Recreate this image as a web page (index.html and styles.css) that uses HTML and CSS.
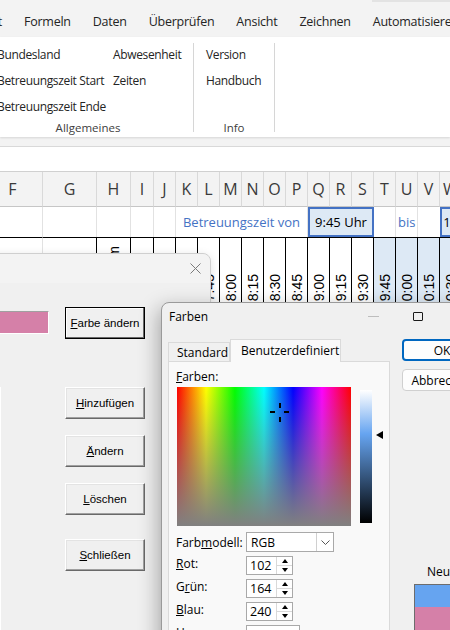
FILE: index.html
```html
<!DOCTYPE html>
<html lang="de">
<head>
    <meta charset="UTF-8">
    <title>Farben</title>
    <link rel="stylesheet" href="styles.css">
</head>
<body>

    <div class="topstrip"><div class="searchbox"></div></div>

    <div class="tabs">
        <span class="tab first">Seitenlayout</span>
        <span class="tab">Formeln</span>
        <span class="tab">Daten</span>
        <span class="tab">Überprüfen</span>
        <span class="tab">Ansicht</span>
        <span class="tab">Zeichnen</span>
        <span class="tab">Automatisieren</span>
    </div>

    <div class="ribbon">
        <div class="group allg">
            <div class="items">
                <div class="col col1">
                    <span>Bundesland</span>
                    <span>Betreuungszeit Start</span>
                    <span>Betreuungszeit Ende</span>
                </div>
                <div class="col">
                    <span>Abwesenheit</span>
                    <span>Zeiten</span>
                </div>
            </div>
            <div class="glabel">Allgemeines</div>
        </div>
        <div class="sep"></div>
        <div class="group info">
            <div class="items">
                <div class="col">
                    <span>Version</span>
                    <span>Handbuch</span>
                </div>
            </div>
            <div class="glabel">Info</div>
        </div>
        <div class="sep"></div>
    </div>

    <div class="formulabar"></div>

    <div class="sheet">
        <div class="hd">F</div><div class="hd">G</div><div class="hd">H</div><div class="hd">I</div><div class="hd">J</div>
        <div class="hd">K</div><div class="hd">L</div><div class="hd">M</div><div class="hd">N</div><div class="hd">O</div>
        <div class="hd">P</div><div class="hd">Q</div><div class="hd">R</div><div class="hd">S</div><div class="hd">T</div>
        <div class="hd">U</div><div class="hd">V</div><div class="hd">W</div><div class="hd">X</div><div class="hd">Y</div>

        <div class="c1"></div><div class="c1"></div><div class="c1"></div><div class="c1"></div><div class="c1"></div>
        <div class="c1 label span6">Betreuungszeit von</div>
        <div class="c1 timebox span3">9:45 Uhr</div>
        <div class="c1"></div>
        <div class="c1 bis">bis</div>
        <div class="c1 plain"></div>
        <div class="c1 timebox span3">10:30 Uhr</div>

        <div class="c2 light"></div>
        <div class="c2 light edge"></div>
        <div class="c2 rc top"><span class="rot">Datum</span></div>
        <div class="c2 rc"></div>
        <div class="c2 rc"></div>
        <div class="c2 rc"><span class="rot">7:30</span></div>
        <div class="c2 rc"><span class="rot">7:45</span></div>
        <div class="c2 rc"><span class="rot">8:00</span></div>
        <div class="c2 rc"><span class="rot">8:15</span></div>
        <div class="c2 rc"><span class="rot">8:30</span></div>
        <div class="c2 rc"><span class="rot">8:45</span></div>
        <div class="c2 rc"><span class="rot">9:00</span></div>
        <div class="c2 rc"><span class="rot">9:15</span></div>
        <div class="c2 rc"><span class="rot">9:30</span></div>
        <div class="c2 rc blue"><span class="rot">9:45</span></div>
        <div class="c2 rc blue"><span class="rot">10:00</span></div>
        <div class="c2 rc blue"><span class="rot">10:15</span></div>
        <div class="c2 rc blue"><span class="rot">10:30</span></div>
        <div class="c2 rc blue"><span class="rot">10:45</span></div>
        <div class="c2 rc blue"><span class="rot">11:00</span></div>
    </div>

    <!-- UserForm -->
    <div class="userform">
        <div class="uf-title">
            <svg class="uf-close" width="11" height="11" viewBox="0 0 11 11"><path d="M0.5 0.5 L10.5 10.5 M10.5 0.5 L0.5 10.5" stroke="#7a7a7a" stroke-width="1" fill="none"/></svg>
        </div>
        <div class="uf-body">
            <div class="uf-left">
                <div class="swatch"></div>
                <div class="listbox"></div>
            </div>
            <div class="uf-buttons">
                <button class="btn default" type="button"><u>F</u>arbe ändern</button>
                <button class="btn gap-big" type="button"><u>H</u>inzufügen</button>
                <button class="btn gap" type="button"><u>Ä</u>ndern</button>
                <button class="btn gap" type="button"><u>L</u>öschen</button>
                <button class="btn gap-mid" type="button"><u>S</u>chließen</button>
            </div>
        </div>
    </div>

    <!-- Farben dialog -->
    <div class="farben">
        <div class="fb-title">
            <span class="fb-name">Farben</span>
            <span class="fb-min"></span>
            <span class="fb-max"></span>
        </div>
        <div class="fb-body">
            <div class="fb-left">
                <div class="fb-tabs">
                    <div class="fb-tab">Standard</div>
                    <div class="fb-tab active">Benutzerdefiniert</div>
                </div>
                <div class="fb-panel">
                    <div class="fb-label"><u>F</u>arben:</div>
                    <div class="picker">
                        <div class="spectrum">
                            <svg class="cross" width="20" height="20" viewBox="0 0 20 20">
                                <rect x="9" y="0" width="2" height="5" fill="#000"/>
                                <rect x="9" y="14" width="2" height="5" fill="#000"/>
                                <rect x="0" y="8" width="5" height="2" fill="#000"/>
                                <rect x="14" y="8" width="5" height="2" fill="#000"/>
                            </svg>
                        </div>
                        <div class="lumbar"></div>
                        <div class="lumarrow"><span></span></div>
                    </div>
                    <div class="frow combo-row">
                        <span class="flabel">Farb<u>m</u>odell:</span>
                        <div class="combo"><span>RGB</span><span class="drop"><svg width="9" height="5" viewBox="0 0 9 5"><path d="M0.5 0.5 L4.5 4.5 L8.5 0.5" stroke="#555" fill="none"/></svg></span></div>
                    </div>
                    <div class="frow">
                        <span class="flabel"><u>R</u>ot:</span>
                        <div class="spin"><span class="val">102</span><span class="arrows"><i class="up"></i><i class="down"></i></span></div>
                    </div>
                    <div class="frow">
                        <span class="flabel">G<u>r</u>ün:</span>
                        <div class="spin"><span class="val">164</span><span class="arrows"><i class="up"></i><i class="down"></i></span></div>
                    </div>
                    <div class="frow">
                        <span class="flabel"><u>B</u>lau:</span>
                        <div class="spin"><span class="val">240</span><span class="arrows"><i class="up"></i><i class="down"></i></span></div>
                    </div>
                    <div class="frow">
                        <span class="flabel"><u>H</u>ex:</span>
                        <div class="spin wide"><span class="val">#66A4F0</span></div>
                    </div>
                </div>
            </div>
            <div class="fb-right">
                <button class="wbtn ok" type="button">OK</button>
                <button class="wbtn" type="button">Abbrechen</button>
                <div class="neu">Neu</div>
                <div class="preview">
                    <div class="p-new"></div>
                    <div class="p-old"></div>
                </div>
            </div>
        </div>
    </div>

</body>
</html>
```

FILE: styles.css
```css
html, body {
    margin: 0;
    padding: 0;
}

body {
    width: 450px;
    height: 630px;
    overflow: hidden;
    position: relative;
    background-color: #f3f3f3;
    font-family: "Open Sans", "Noto Sans", sans-serif;
    color: #1f1f1f;
}

/* ---------- ribbon ---------- */

.topstrip {
    height: 5px;
    position: relative;
}

.searchbox {
    margin-left: 372px;
    height: 2px;
    background-color: #e3e3e3;
}

.tabs {
    height: 32px;
    display: flex;
    align-items: center;
    gap: 22px;
    white-space: nowrap;
    font-size: 12.5px;
    letter-spacing: -0.25px;
    color: #242424;
}

.tab.first {
    width: 80px;
    margin-left: -78px;
    text-align: right;
    flex-shrink: 0;
}

.ribbon {
    height: 100px;
    background-color: #fff;
    display: flex;
    box-shadow: 0 1px 2px rgba(0,0,0,0.12);
    font-size: 12px;
    letter-spacing: -0.35px;
    color: #242424;
}

.group {
    display: flex;
    flex-direction: column;
}

.group.allg {
    width: 210px;
    margin-left: -17px;
    flex-shrink: 0;
}

.group.info {
    width: 80px;
    flex-shrink: 0;
}

.items {
    display: flex;
    padding-top: 5px;
    height: 78px;
}

.allg .items {
    padding-left: 14px;
}

.info .items {
    padding-left: 12px;
}

.col {
    display: flex;
    flex-direction: column;
    white-space: nowrap;
}

.col span {
    height: 26px;
    line-height: 26px;
}

.col1 {
    width: 116px;
}

.glabel {
    text-align: center;
    font-size: 11.5px;
    letter-spacing: 0;
    color: #404040;
    line-height: 16px;
}

.sep {
    width: 1px;
    background-color: #d6d6d6;
    margin: 6px 0 5px;
}

.formulabar {
    margin-top: 9px;
    height: 24px;
    background-color: #fff;
    border-top: 1px solid #d9d9d9;
}

/* ---------- sheet ---------- */

.sheet {
    margin-left: -17px;
    display: grid;
    grid-template-columns: 60px 54px 34px 23px 22px repeat(15, 22px);
    grid-template-rows: 35px 30px 420px;
    background-color: #fff;
    border-top: 1px solid #d0d0d0;
}

.hd {
    background-color: #f3f3f3;
    border-right: 1px solid #d9d9d9;
    border-bottom: 1px solid #c6c6c6;
    font-size: 16px;
    color: #3a3a3a;
    display: flex;
    align-items: center;
    justify-content: center;
}

.c1 {
    border-right: 1px solid #e2e2e2;
    font-size: 13px;
    display: flex;
    align-items: center;
    white-space: nowrap;
}

.c1.plain {
    border-right: none;
}

.span6 {
    grid-column: span 6;
}

.span3 {
    grid-column: span 3;
}

.label {
    justify-content: center;
    color: #4472c4;
}

.bis {
    color: #4472c4;
    padding-left: 2px;
}

.timebox {
    background-color: #dde9f5;
    border: 2px solid #4472c4;
    justify-content: center;
    color: #000;
}

.c2 {
    border-top: 1px solid #000;
}

.c2.light {
    border-right: 1px solid #e2e2e2;
}

.c2.edge {
    border-right: 1px solid #000;
}

.c2.rc {
    border-right: 1px solid #000;
    display: flex;
    justify-content: center;
    align-items: flex-start;
    padding-top: 36px;
}

.c2.top {
    padding-top: 8px;
}

.c2.blue {
    background-color: #dde9f5;
}

.rot {
    writing-mode: vertical-rl;
    transform: rotate(180deg);
    font-family: "Liberation Sans", sans-serif;
    font-size: 14px;
    line-height: 16px;
    color: #000;
}

/* ---------- UserForm ---------- */

.userform {
    position: absolute;
    left: -41px;
    top: 253px;
    width: 250px;
    height: 420px;
    background-color: #f0f0f0;
    border: 1px solid #cfcfcf;
    border-top-right-radius: 8px;
    box-shadow: 0 2px 10px rgba(0,0,0,0.12);
}

.uf-title {
    height: 29px;
    background-color: #f3f3f3;
    border-top-right-radius: 8px;
    display: flex;
    align-items: center;
    justify-content: flex-end;
    padding-right: 9px;
}

.uf-body {
    display: flex;
    font-family: "Liberation Sans", sans-serif;
    font-size: 11.5px;
}

.uf-left {
    width: 105px;
    display: flex;
    flex-direction: column;
}

.swatch {
    margin: 28px 0 0 20px;
    width: 68px;
    height: 21px;
    background-color: #d580a8;
    border-top: 1px solid #a0a0a0;
    border-bottom: 1px solid #fff;
    border-right: 1px solid #fff;
}

.listbox {
    margin: 53px 0 0 20px;
    width: 21px;
    height: 300px;
    background-color: #fff;
}

.uf-buttons {
    display: flex;
    flex-direction: column;
    padding-top: 24px;
}

.btn {
    width: 80px;
    height: 32px;
    padding: 0;
    background-color: #f0f0f0;
    border: 1px solid;
    border-color: #fff #696969 #696969 #fff;
    box-shadow: inset -1px -1px #a0a0a0, inset 1px 1px #e3e3e3;
    font-family: inherit;
    font-size: inherit;
    color: #000;
}

.btn.default {
    border-color: #000;
    box-shadow: inset -1px -1px #696969, inset 1px 1px #fff;
}

.btn.gap-big {
    margin-top: 48px;
}

.btn.gap {
    margin-top: 16px;
}

.btn.gap-mid {
    margin-top: 24px;
}

/* ---------- Farben dialog ---------- */

.farben {
    position: absolute;
    left: 161px;
    top: 302px;
    width: 320px;
    height: 360px;
    background-color: #f0f0f0;
    border: 1px solid #9a9a9a;
    border-top-left-radius: 8px;
    box-shadow: -3px 6px 20px rgba(0,0,0,0.3);
    font-size: 12px;
    color: #000;
}

.fb-title {
    height: 27px;
    display: flex;
    align-items: center;
    padding-left: 7px;
}

.fb-name {
    flex: 1;
}

.fb-min {
    width: 11px;
    height: 1px;
    background-color: #bdbdbd;
    margin-right: 34px;
}

.fb-max {
    width: 8px;
    height: 7px;
    border: 1px solid #1a1a1a;
    border-radius: 1px;
    margin-right: 59px;
    margin-top: -1px;
}

.fb-body {
    display: flex;
    padding: 9px 0 0 6px;
    gap: 12px;
}

.fb-left {
    width: 224px;
    display: flex;
    flex-direction: column;
}

.fb-tabs {
    display: flex;
    align-items: flex-end;
    height: 22px;
}

.fb-tab {
    height: 19px;
    line-height: 19px;
    box-sizing: border-box;
    border: 1px solid #dadada;
    border-bottom: none;
    padding-left: 8px;
    width: 62px;
    background-color: #f0f0f0;
}

.fb-tab.active {
    height: 23px;
    line-height: 21px;
    width: 111px;
    padding-left: 10px;
    background-color: #f9f9f9;
    margin-bottom: -1px;
    position: relative;
}

.fb-panel {
    height: 300px;
    background-color: #f9f9f9;
    border: 1px solid #dadada;
    padding: 7px 0 0 7px;
}

.fb-label {
    line-height: 16px;
}

.picker {
    display: flex;
    margin-top: 2px;
}

.spectrum {
    margin-left: 1px;
    width: 174px;
    height: 139px;
    position: relative;
    background:
        linear-gradient(to bottom, rgba(128,128,128,0), #808080),
        linear-gradient(to right, #f00 0%, #ff0 16.7%, #0f0 33.3%, #0ff 50%, #00f 66.7%, #f0f 83.3%, #f00 100%);
}

.cross {
    position: absolute;
    left: 93px;
    top: 16px;
}

.lumbar {
    margin: 3px 0 0 9px;
    width: 12px;
    height: 133px;
    background: linear-gradient(to bottom, #fff 0%, #66a4f0 33%, #000 100%);
}

.lumarrow {
    padding: 44px 0 0 4px;
}

.lumarrow span {
    display: block;
    width: 0;
    height: 0;
    border-top: 4px solid transparent;
    border-bottom: 4px solid transparent;
    border-right: 7px solid #000;
}

.frow {
    display: flex;
    align-items: flex-start;
    margin-top: 4px;
}

.frow.combo-row {
    align-items: center;
    margin-top: 6px;
}

.flabel {
    width: 70px;
    line-height: 15px;
}

.combo {
    width: 88px;
    height: 20px;
    box-sizing: border-box;
    border: 1px solid #a9a9a9;
    background-color: #fff;
    display: flex;
    align-items: center;
    padding-left: 4px;
}

.combo span:first-child {
    flex: 1;
}

.drop {
    width: 16px;
    height: 18px;
    border-left: 1px solid #d0d0d0;
    display: flex;
    align-items: center;
    justify-content: center;
}

.spin {
    width: 47px;
    height: 19px;
    box-sizing: border-box;
    border: 1px solid #a9a9a9;
    background-color: #fff;
    display: flex;
    align-items: center;
}

.spin.wide {
    width: 54px;
}

.val {
    flex: 1;
    padding-left: 3px;
    font-size: 12.5px;
}

.arrows {
    width: 15px;
    height: 17px;
    border-left: 1px solid #d9d9d9;
    display: flex;
    flex-direction: column;
}

.arrows i {
    flex: 1;
    display: flex;
    align-items: center;
    justify-content: center;
}

.arrows i.up {
    border-bottom: 1px solid #d9d9d9;
}

.arrows i::after {
    content: "";
    width: 0;
    height: 0;
    border-left: 3.5px solid transparent;
    border-right: 3.5px solid transparent;
}

.arrows i.up::after {
    border-bottom: 4px solid #000;
}

.arrows i.down::after {
    border-top: 4px solid #000;
}

.fb-right {
    width: 80px;
    display: flex;
    flex-direction: column;
}

.wbtn {
    width: 80px;
    height: 22px;
    padding: 0;
    background-color: #fdfdfd;
    border: 1px solid #d0d0d0;
    border-radius: 4px;
    font-family: inherit;
    font-size: 12px;
    color: #000;
}

.wbtn.ok {
    border: 2px solid #0067c0;
}

.wbtn + .wbtn {
    margin-top: 8px;
}

.neu {
    margin: 174px 0 0 25px;
    line-height: 14px;
}

.preview {
    margin: 5px 0 0 12px;
    width: 60px;
    border: 1px solid #6d6d6d;
}

.p-new {
    height: 22px;
    background-color: #66a4f0;
}

.p-old {
    height: 40px;
    background-color: #d580a8;
}
```
